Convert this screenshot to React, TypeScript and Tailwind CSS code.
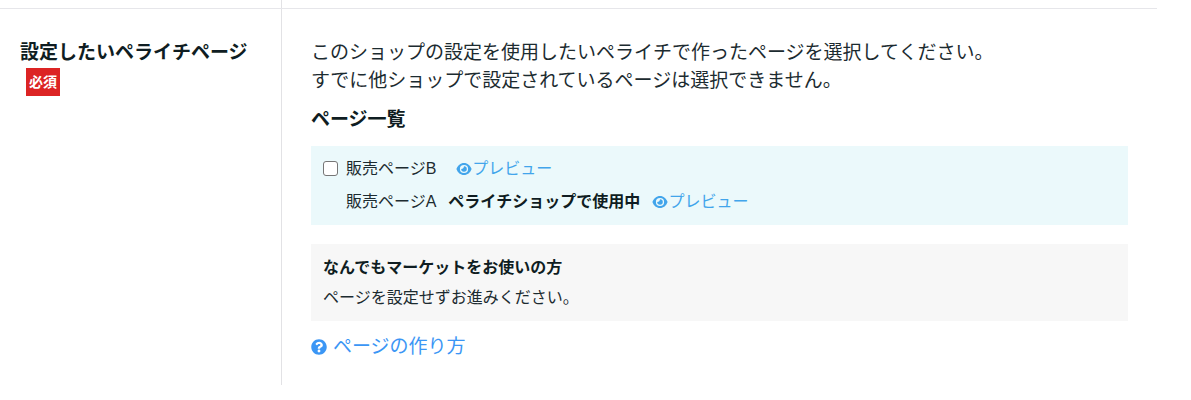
import React from "react";
import { FaQuestionCircle } from "react-icons/fa";

type PageItem = {
  id: string;
  name: string;
  usedBy?: string;
};

const pages: PageItem[] = [
  { id: "page-b", name: "販売ページB" },
  { id: "page-a", name: "販売ページA", usedBy: "ペライチショップで使用中" },
];

function EyeIcon() {
  return (
    <svg viewBox="0 0 16 14" className="h-[14px] w-4" aria-hidden="true">
      <path
        fill="currentColor"
        fillRule="evenodd"
        d="M8 1C4.4 1 1.8 3.5.6 6.5a1.3 1.3 0 0 0 0 1C1.8 10.500 4.400 13 8 13s6.200-2.500 7.400-5.500a1.300 1.300 0 0 0 0-1C14.200 3.500 11.600 1 8 1Zm0 1.900a4.100 4.100 0 1 1 0 8.200 4.100 4.100 0 0 1 0-8.200Z"
      />
      <path
        fill="currentColor"
        d="M8 4.200c0 1.600-1.200 2.800-2.800 2.800a2.800 2.800 0 1 0 2.800-2.800Z"
      />
    </svg>
  );
}

function PreviewLink() {
  return (
    <a href="#preview" className="flex items-center text-[#42a5eb] hover:underline">
      <EyeIcon />
      プレビュー
    </a>
  );
}

function PageRow({ page }: { page: PageItem }) {
  if (page.usedBy) {
    return (
      <li className="flex h-[33px] items-center pl-[23px]">
        <span>{page.name}</span>
        <strong className="mr-3 ml-3 font-bold text-[#0f1d22]">{page.usedBy}</strong>
        <PreviewLink />
      </li>
    );
  }

  return (
    <li className="flex h-[33px] items-center">
      <input
        id={page.id}
        type="checkbox"
        className="mr-2 h-[15px] w-[15px] appearance-none rounded-[3px] border border-[#767676] bg-white checked:bg-[#42a5eb]"
      />
      <label htmlFor={page.id} className="mr-5">
        {page.name}
      </label>
      <PreviewLink />
    </li>
  );
}

export default function App() {
  return (
    <main className="mr-[34px] font-['Liberation_Sans','Noto_Sans_CJK_JP',sans-serif] text-[#1c2b30]">
      {/* Tail of the previous row */}
      <div className="grid h-[9px] grid-cols-[281px_minmax(0,1fr)] border-b border-[#e6e6ea]">
        <div />
        <div className="border-l border-[#e2e2e5]" />
      </div>

      <section className="grid grid-cols-[281px_minmax(0,1fr)]">
        <div className="pt-[30px] pl-5">
          <h2 className="text-[19px] leading-7 font-bold text-[#0f1d22]">設定したいペライチページ</h2>
          <span className="ml-[6px] mt-px inline-block bg-[#dc2424] px-[3px] text-sm leading-7 font-bold text-white">
            必須
          </span>
        </div>

        <div className="border-l border-[#e2e2e5] px-[29px] pt-[30px] pb-6">
          <p className="text-[19px] leading-7">
            このショップの設定を使用したいペライチで作ったページを選択してください。
            <br />
            すでに他ショップで設定されているページは選択できません。
          </p>

          <h3 className="mt-[11px] text-[19px] leading-7 font-bold text-[#0f1d22]">ページ一覧</h3>
          <ul className="mt-3 bg-[#ebf9fb] px-3 pt-[6px] pb-[7px] text-base">
            {pages.map((page) => (
              <PageRow key={page.id} page={page} />
            ))}
          </ul>

          <div className="mt-[19px] bg-[#f7f7f7] px-3 pt-[9px] pb-2 text-base leading-[30px]">
            <p className="font-bold text-[#0f1d22]">なんでもマーケットをお使いの方</p>
            <p>ページを設定せずお進みください。</p>
          </div>

          <a
            href="#how-to"
            className="mt-3 flex w-fit items-center gap-[6px] text-[19px] leading-7 text-[#3b96f5] hover:underline"
          >
            <FaQuestionCircle className="h-4 w-4" aria-hidden="true" />
            ページの作り方
          </a>
        </div>
      </section>
    </main>
  );
}
